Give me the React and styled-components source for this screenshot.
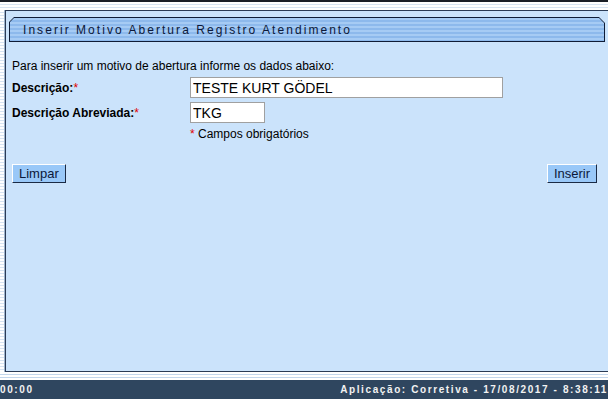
import React from 'react';
import styled, { createGlobalStyle } from 'styled-components';

const GlobalStyle = createGlobalStyle`
  html, body {
    margin: 0;
    padding: 0;
    background: #ffffff;
    overflow: hidden;
  }
  body {
    font-family: "Liberation Sans", Arial, sans-serif;
    font-size: 12px;
    color: #000;
  }
`;

const stripes = `repeating-linear-gradient(
  to bottom,
  #ffffff 0px,
  #ffffff 2px,
  #d7e4f2 2px,
  #d7e4f2 3px
)`;

const Page = styled.div`
  width: 608px;
  height: 399px;
  display: flex;
  flex-direction: column;
`;

const TopEdge = styled.div`
  height: 10px;
  border-top: 2px solid #1b1f27;
  box-sizing: border-box;
  background: ${stripes};
`;

const Middle = styled.div`
  flex: 1;
  display: flex;
  min-height: 0;
`;

const SideStrip = styled.div`
  width: 5px;
  background: ${stripes};
  border-right: 1px solid #9fb4cc;
  box-sizing: border-box;
`;

const Panel = styled.div`
  flex: 1;
  background: #cbe3fb;
  border-top: 1px solid #2b3b55;
  border-left: 1px solid #2b3b55;
  border-bottom: 1px solid #2b3b55;
  padding: 6px 0 0 3px;
  display: flex;
  flex-direction: column;
`;

const HeaderOuter = styled.div`
  width: 596px;
  height: 25px;
  background: #0f1c36;
  clip-path: polygon(5px 0, 590px 0, 596px 6px, 596px 100%, 0 100%, 0 5px);
  padding: 1px;
  box-sizing: border-box;
`;

const HeaderInner = styled.div`
  height: 100%;
  background: repeating-linear-gradient(
    to bottom,
    #a6cbf4 0px,
    #a6cbf4 2px,
    #8db9ec 2px,
    #8db9ec 4px
  );
  clip-path: polygon(4px 0, 589px 0, 594px 5px, 594px 100%, 0 100%, 0 4px);
  display: flex;
  align-items: center;
  padding-left: 13px;
  box-sizing: border-box;
`;

const Title = styled.span`
  font-size: 12px;
  letter-spacing: 2.05px;
  color: #0c1838;
`;

const Content = styled.div`
  padding: 17px 0 0 3px;
  display: flex;
  flex-direction: column;
`;

const Intro = styled.div`
  height: 14px;
  line-height: 14px;
  margin-bottom: 4px;
`;

const FieldRow = styled.div`
  display: flex;
  align-items: center;
  height: 21px;
  margin-bottom: ${({ $gap }) => $gap}px;
`;

const Label = styled.label`
  width: 178px;
  font-weight: bold;
  font-size: 12px;
`;

const Star = styled.span`
  color: #e00000;
  font-weight: normal;
`;

const Input = styled.input`
  width: ${({ $w }) => $w}px;
  height: 21px;
  box-sizing: border-box;
  border: 1px solid #a0a0a0;
  background: #fff;
  font-family: "Liberation Sans", Arial, sans-serif;
  font-size: 14px;
  padding: 0 2px;
  color: #000;
  outline: none;
`;

const Note = styled.div`
  margin-left: 178px;
  margin-top: 4px;
  font-size: 12px;
  line-height: 14px;
`;

const ButtonBar = styled.div`
  display: flex;
  justify-content: space-between;
  margin-top: 23px;
  padding-right: 11px;
`;

const Button = styled.button`
  height: 19px;
  padding: 0 6px;
  background: #99c8f8;
  border: 1px solid;
  border-color: #ffffff #1a2a44 #1a2a44 #ffffff;
  font-family: "Liberation Sans", Arial, sans-serif;
  font-size: 13px;
  color: #0c1838;
  line-height: 15px;
  cursor: pointer;
`;

const BottomEdge = styled.div`
  height: 8px;
  background: repeating-linear-gradient(
    to bottom,
    #ffffff 0px,
    #ffffff 2px,
    #c2d6ec 2px,
    #c2d6ec 3px
  );
`;

const Footer = styled.div`
  height: 19px;
  background: #2f465f;
  color: #f2f2f2;
  font-size: 10px;
  font-weight: bold;
  letter-spacing: 1.6px;
  display: flex;
  align-items: center;
  justify-content: space-between;
  overflow: hidden;
  white-space: nowrap;
`;

export default function App() {
  return (
    <>
      <GlobalStyle />
      <Page>
        <TopEdge />
        <Middle>
          <SideStrip />
          <Panel>
            <HeaderOuter>
              <HeaderInner>
                <Title>Inserir Motivo Abertura Registro Atendimento</Title>
              </HeaderInner>
            </HeaderOuter>
            <Content>
              <Intro>Para inserir um motivo de abertura informe os dados abaixo:</Intro>
              <FieldRow $gap={4}>
                <Label>Descrição:<Star>*</Star></Label>
                <Input $w={313} defaultValue="TESTE KURT GÖDEL" />
              </FieldRow>
              <FieldRow $gap={0}>
                <Label>Descrição Abreviada:<Star>*</Star></Label>
                <Input $w={75} defaultValue="TKG" />
              </FieldRow>
              <Note><Star>*</Star> Campos obrigatórios</Note>
              <ButtonBar>
                <Button>Limpar</Button>
                <Button>Inserir</Button>
              </ButtonBar>
            </Content>
          </Panel>
        </Middle>
        <BottomEdge />
        <Footer>
          <span>00:00</span>
          <span>Aplicação: Corretiva - 17/08/2017 - 8:38:11</span>
        </Footer>
      </Page>
    </>
  );
}
